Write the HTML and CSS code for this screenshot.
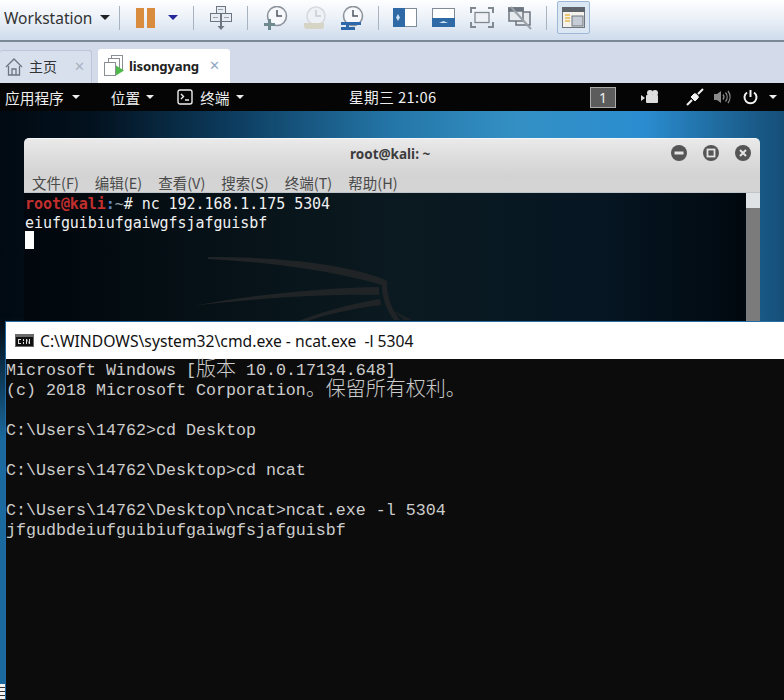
FILE: index.html
```html
<!DOCTYPE html>
<html lang="zh">
<head>
<meta charset="utf-8">
<title>Workstation</title>
<link rel="stylesheet" href="styles.css">
</head>
<body>
<div class="app">
  <header class="toolbar">
    <div class="wsmenu"><span class="wsname">Workstation</span><i class="caret dark"></i></div>
    <span class="sep s1"></span>
    <svg class="ic pause" width="20" height="20" viewBox="0 0 20 20"><rect x="0" y="0" width="8" height="20" fill="#d98b3e"/><rect x="11" y="0" width="8" height="20" fill="#d98b3e"/></svg>
    <i class="caret blue"></i>
    <span class="sep s2"></span>
    <svg class="ic keys" width="22" height="24" viewBox="0 0 22 24" fill="#e8edf3" stroke="#6d7580"><rect x="6.500" y=".5" width="9" height="7"/><rect x=".5" y="7.500" width="10" height="8"/><rect x="11.500" y="7.500" width="10" height="8"/><path d="M3 11.500h5M14 11.500h5M8 3.500h5" stroke="#9aa3ad"/><path d="M11 16v5" stroke="#6d7580" stroke-width="2"/><path d="M7.500 20h7L11 24z" fill="#6d7580" stroke="none"/></svg>
    <span class="sep s3"></span>
    <svg class="ic clock1" width="25" height="24" viewBox="0 0 25 24"><circle cx="14" cy="10" r="9.500" fill="#f6f8fb" stroke="#8d949c" stroke-width="1.600"/><path d="M14 4v6h5" fill="none" stroke="#4d5660" stroke-width="1.500"/><path d="M5 13v4H1v3h4v4h3v-4h4v-3H8v-4z" fill="#6f8a8f"/></svg>
    <svg class="ic clock2" width="24" height="24" viewBox="0 0 24 24"><circle cx="13" cy="10" r="9" fill="#eef1f5" stroke="#d6dade" stroke-width="1.600"/><path d="M13 4v6h5" fill="none" stroke="#c6cbd1" stroke-width="1.500"/><path d="M1 17h20v3a3 3 0 0 1-3 3H4a3 3 0 0 1-3-3z" fill="#d6d4c4"/></svg>
    <svg class="ic clock3" width="24" height="24" viewBox="0 0 24 24"><circle cx="13" cy="10" r="9.500" fill="#f6f8fb" stroke="#8d949c" stroke-width="1.600"/><path d="M13 4v6h5" fill="none" stroke="#4d5660" stroke-width="1.500"/><path d="M1 16h20v3H9v2h6v3H1v-3h5v-2H1z" fill="#2f68a8"/></svg>
    <span class="sep s4"></span>
    <svg class="ic fit1" width="24" height="19" viewBox="0 0 24 19"><rect width="24" height="19" fill="#7f8b97"/><rect x="1" y="1" width="22" height="17" fill="#fff"/><rect x="0" y="0" width="12" height="19" fill="#2f6aa6"/><path d="M5 6l2 3.500-2 3.500-2-3.500z" fill="#cfe2f5"/></svg>
    <svg class="ic fit2" width="23" height="19" viewBox="0 0 23 19"><rect width="23" height="19" fill="#7f8b97"/><rect x="1" y="1" width="21" height="17" fill="#fff"/><rect x="0" y="10" width="23" height="9" fill="#2f6aa6"/><path d="M7 15l4.500-2 4.500 2z" fill="#cfe2f5"/></svg>
    <svg class="ic fit3" width="24" height="21" viewBox="0 0 24 21" fill="none" stroke="#808890" stroke-width="2"><path d="M1 6V1h5M18 1h5v5M23 15v5h-5M6 20H1v-5"/><rect x="5" y="5.500" width="14" height="10" fill="#eef2f7" stroke-width="1.300"/></svg>
    <svg class="ic fit4" width="24" height="24" viewBox="0 0 24 24" fill="#e6e9ed" stroke="#6d7580" stroke-width="1.500"><rect x="8" y="6" width="14" height="13"/><rect x="1" y="2" width="14" height="13"/><rect x="1" y="2" width="14" height="3" fill="#6d7580"/><path d="M3 1l20 22" stroke="#9aa1a8" stroke-width="2"/></svg>
    <span class="sep s5"></span>
    <div class="activebtn">
      <svg width="23" height="21" viewBox="0 0 23 21"><rect x=".5" y=".5" width="22" height="20" fill="#f4f2ea" stroke="#6f7680"/><rect x="0" y="0" width="23" height="5" fill="#5d646c"/><path d="M3 8h5M3 11h5M3 14h5" stroke="#e3b94f" stroke-width="1.500"/><rect x="10" y="9" width="11" height="10" fill="#c5ccd6" stroke="#6f7680"/></svg>
    </div>
  </header>
  <nav class="tabbar">
    <div class="tab home">
      <svg width="18" height="19" viewBox="0 0 18 19" fill="none" stroke="#6b7480" stroke-width="1.300"><path d="M1 10 9 2l8 8"/><path d="M3.500 9v9h11V9"/><path d="M7 18v-6h4v6"/></svg>
      <span class="tabtxt">主页</span>
      <span class="x grey">✕</span>
    </div>
    <div class="tab vm">
      <svg width="21" height="21" viewBox="0 0 21 21" fill="#fff" stroke="#8a8f96"><rect x="7.500" y=".5" width="11" height="14"/><rect x="4.500" y="3.500" width="11" height="12"/><rect x=".5" y="7.500" width="11" height="13"/><path d="M12 10.500l8 5-8 5z" fill="#4fb84a" stroke="none"/></svg>
      <b class="vmname">lisongyang</b>
      <span class="x blue">✕</span>
    </div>
  </nav>
  <main class="desktop">
    <div class="panel">
      <span class="pitem apps">应用程序<i class="caret light"></i></span>
      <span class="pitem places">位置<i class="caret light"></i></span>
      <span class="pitem term">
        <svg width="16" height="16" viewBox="0 0 16 16" fill="none" stroke="#eee" stroke-width="1.400"><rect x="1" y="1" width="14" height="14" rx="2"/><path d="M4 5l2.500 2.500L4 10M8 11h4"/></svg>
        <span>终端</span><i class="caret light"></i>
      </span>
      <span class="clock">星期三 21:06</span>
      <span class="workspace">1</span>
      <svg class="tray cam" width="17" height="14" viewBox="0 0 17 14" fill="#ddd"><circle cx="9" cy="3" r="3"/><circle cx="14" cy="3" r="3"/><rect x="5" y="5" width="12" height="8" rx="1"/><path d="M0 5l4 3-4 3z"/></svg>
      <svg class="tray plug" width="18" height="18" viewBox="0 0 18 18" fill="none" stroke="#f2f2f2" stroke-width="2"><path d="M1 17l5-5M12 6l5-5"/><path d="M5 9l4 4 3-3c1.500-1.500-2.500-5.500-4-4z" fill="#f2f2f2" stroke-width="1"/></svg>
      <svg class="tray vol" width="18" height="14" viewBox="0 0 18 14" fill="none" stroke="#8a8a8a" stroke-width="1.300"><path d="M0 4h3l4-3v12l-4-3H0z" fill="#8a8a8a" stroke="none"/><path d="M9 4.500a4 4 0 0 1 0 5M11.500 2.500a7 7 0 0 1 0 9M14 1a10 10 0 0 1 0 12"/></svg>
      <svg class="tray pow" width="15" height="16" viewBox="0 0 15 16" fill="none" stroke="#f2f2f2" stroke-width="2"><path d="M7.500 1v7"/><path d="M4 3.500a6 6 0 1 0 7 0"/></svg>
      <i class="caret light end"></i>
    </div>

    <section class="terminal">
      <div class="tchrome">
        <div class="ttitle">
          <span class="ttext">root@kali: ~</span>
          <div class="wbtns">
            <svg class="wbtn" width="20" height="16" viewBox="0 0 16 16"><circle cx="8" cy="8" r="8" fill="#555"/><rect x="3.500" y="6.500" width="9" height="3" fill="#e4e4e4"/></svg>
            <svg class="wbtn" width="20" height="16" viewBox="0 0 16 16"><circle cx="8" cy="8" r="8" fill="#555"/><rect x="4.500" y="4.500" width="7" height="7" fill="none" stroke="#e4e4e4" stroke-width="1.800"/></svg>
            <svg class="wbtn" width="20" height="16" viewBox="0 0 16 16"><circle cx="8" cy="8" r="8" fill="#555"/><path d="M5 5l6 6M11 5l-6 6" stroke="#e4e4e4" stroke-width="2"/></svg>
          </div>
        </div>
        <div class="tmenu">
          <span>文件(F)</span><span>编辑(E)</span><span>查看(V)</span><span>搜索(S)</span><span>终端(T)</span><span>帮助(H)</span>
        </div>
      </div>
      <div class="tbody">
        <svg class="dragon" width="736" height="128" viewBox="24 193 736 128" fill="#212426">
          <path d="M208 257C270 257 340 262 386 280L385 286C340 272 270 262 208 259z"/>
          <path d="M193 306C250 295 320 288 379 287L379 295C320 294 250 299 193 306z"/>
          <path d="M298 321C325 311 350 304 380 299L381 305C350 309 325 315 308 321z"/>
          <path d="M382 280L387 281C386 295 392 310 400 320L394 320C386 310 381 295 382 280z"/>
          <path d="M392 310L412 320H404z" fill="#1c2124"/>
        </svg>
        <div class="tlines">
          <div class="tline"><span class="tuser">root@kali</span><span class="tcolon">:</span><span class="tdim">~</span><span># nc 192.168.1.175 5304</span></div>
          <div class="tline">eiufguibiufgaiwgfsjafguisbf</div>
          <div class="tline"><span class="cursor"></span></div>
        </div>
        <div class="scroll"><div class="thumb"></div></div>
      </div>
    </section>

    <section class="cmd">
      <div class="cmdtitle">
        <svg width="19" height="13" viewBox="0 0 19 13"><rect width="19" height="13" fill="#6a6a6a"/><rect x="1" y="3" width="17" height="9" fill="#111"/><path d="M3 5h3v1H4v3h2v1H3zM8 8h1v2H8zM8 5h1v2H8zM11 5h1l2 4V5h1v5h-1l-2-4v4h-1z" fill="#ddd"/></svg>
        <span class="cmdtext">C:\WINDOWS\system32\cmd.exe - ncat.exe&nbsp; -l 5304</span>
      </div>
      <div class="cmdbody">
        <div class="cline"><span>Microsoft Windows [</span><span class="cjk">版本</span><span> 10.0.17134.648]</span></div>
        <div class="cline"><span>(c) 2018 Microsoft Corporation</span><span class="cjk">。保留所有权利。</span></div>
        <div class="cline gap">C:\Users\14762&gt;cd Desktop</div>
        <div class="cline gap">C:\Users\14762\Desktop&gt;cd ncat</div>
        <div class="cline gap">C:\Users\14762\Desktop\ncat&gt;ncat.exe -l 5304</div>
        <div class="cline">jfgudbdeiufguibiufgaiwgfsjafguisbf</div>
      </div>
    </section>
    <div class="sliver"></div>
  </main>
</div>
</body>
</html>
```
FILE: styles.css
```css
* { box-sizing: border-box; }
html, body { margin: 0; padding: 0; height: 700px; overflow: hidden; }
body { font-family: "Noto Sans CJK SC", "Noto Sans", sans-serif; background: #000; }
.app { display: flex; flex-direction: column; width: 784px; height: 700px; }

.caret { display: block; width: 0; height: 0; border-style: solid; border-width: 5px 5px 0; border-color: #222 transparent transparent; }
.caret.blue { border-color: #23279a transparent transparent; margin-left: 12px; }
.caret.light { border-color: #eee transparent transparent; border-width: 4.500px 4.500px 0; }

.toolbar { position: relative; flex: none; height: 42px; display: flex; align-items: center; padding-bottom: 5px; background: linear-gradient(180deg, #fdfeff 0, #eef3f9 40%, #cfdcec 100%); border-bottom: 2px solid #7a8796; }
.wsmenu { display: flex; align-items: center; padding-left: 4px; width: 119px; }
.wsname { font: 15.500px "Noto Sans", sans-serif; color: #333; }
.wsmenu .caret { margin-left: 8px; }
.sep { flex: none; width: 1px; height: 24px; background: #a9b3bf; }
.ic { flex: none; }
.pause { margin-left: 16px; }
.s2 { margin-left: 15px; }
.keys { margin-left: 16px; }
.s3 { margin-left: 15px; }
.clock1 { margin-left: 15px; }
.clock2 { margin-left: 15px; }
.clock3 { margin-left: 13px; }
.s4 { margin-left: 14px; }
.fit1 { margin-left: 14px; }
.fit2 { margin-left: 15px; }
.fit3 { margin-left: 15px; }
.fit4 { margin-left: 14px; }
.s5 { margin-left: 14px; }
.activebtn { flex: none; margin-left: 10px; width: 33px; height: 33px; display: flex; align-items: center; justify-content: center; background: #dbe7f3; border: 1px solid #9db8d6; border-radius: 2px; }

.tabbar { flex: none; height: 41px; display: flex; align-items: flex-end; gap: 6px; background: #d3dbeb; }
.tab { height: 33px; display: flex; align-items: center; border-radius: 3px 3px 0 0; }
.home { width: 92px; padding-left: 5px; padding-bottom: 2px; background: #d8e0ee; border: 1px solid #bcc7d9; border-bottom: 0; border-left: 0; }
.vm { width: 132px; height: 34px; padding-left: 6px; padding-bottom: 1px; background: #fff; }
.tabtxt { margin-left: 6px; font-size: 14px; line-height: 20px; color: #333; }
.vmname { margin-left: 4px; font: bold 13.200px "Noto Sans", sans-serif; color: #222; letter-spacing: -.2px; }
.x { font-size: 13px; line-height: 1; font-family: "DejaVu Sans", sans-serif; }
.x.grey { margin-left: 17px; color: #a9b2bf; }
.x.blue { margin-left: 10px; color: #8fa8c4; }

.desktop { position: relative; flex: 1; overflow: hidden;
  background:
    linear-gradient(180deg, rgba(26,106,159,0) 0, rgba(26,106,159,0) 38%, #1a6a9f 58%),
    linear-gradient(90deg, #010a12 0, #03121f 12%, #0d3d60 30%, #2476a8 50%, #3490c4 66%, #2b8dd0 82%, #1a5c8a 96%, #154f78 100%); }

.panel { position: relative; height: 28px; background: #050505; color: #eee; font-size: 14.700px; display: flex; align-items: center; }
.pitem { display: flex; align-items: center; }
.apps { margin-left: 5px; }
.apps .caret { margin-left: 8px; }
.places { margin-left: 31px; }
.places .caret { margin-left: 6px; }
.term { margin-left: 23px; }
.term span { margin-left: 7px; }
.term .caret { margin-left: 6px; }
.clock { position: absolute; left: 349px; top: 0; line-height: 28px; white-space: nowrap; letter-spacing: .4px; }
.workspace { position: absolute; left: 590px; top: 4px; width: 26px; height: 21px; background: #5c5c5c; border: 1px solid #aaa; text-align: center; font: 14px/19px "Noto Sans", sans-serif; color: #eee; }
.tray { position: absolute; }
.cam { left: 641px; top: 7px; }
.plug { left: 686px; top: 5px; }
.vol { left: 714px; top: 7px; }
.pow { left: 743px; top: 6px; }
.caret.end { position: absolute; left: 769px; top: 12px; }

.terminal { position: absolute; left: 24px; top: 55px; width: 736px; height: 195px; display: flex; flex-direction: column; }
.tchrome { flex: none; height: 55px; background: linear-gradient(180deg, #eaeaea 0, #dedede 30%, #d3d3d3 70%, #d5d5d5 100%); border-radius: 5px 5px 0 0; border-top: 1px solid #f4f6f8; border-bottom: 1px solid #bfc4c8; }
.ttitle { position: relative; height: 30px; text-align: center; }
.ttext { position: absolute; left: 326px; top: 5px; font: bold 13.500px/20px "Noto Sans", sans-serif; color: #3c3c3c; }
.wbtns { position: absolute; right: 7px; top: 6px; display: flex; gap: 12px; }
.wbtn { display: block; }
.tmenu { display: flex; gap: 16px; padding-left: 8px; font-size: 14.500px; line-height: 20px; margin-top: 4px; color: #4a4a4a; }

.tbody { position: relative; flex: 1; overflow: hidden; background: linear-gradient(90deg, #01070c 0, #071319 30%, #0b1a20 50%, #061623 78%, #01090f 98%); }
.dragon { position: absolute; left: 0; top: 0; }
.tlines { position: relative; padding: 2px 0 0 1px; font: 15px/18.500px "DejaVu Sans Mono", monospace; letter-spacing: -.06px; color: #f0f0f0; }
.tline { height: 18.500px; white-space: pre; }
.tuser { color: #c22f2f; font-weight: bold; }
.tcolon { color: #5f86c0; font-weight: bold; }
.tdim { color: #9aa0a8; }
.cursor { display: block; width: 9px; height: 18px; margin-top: -1px; background: #fff; }
.scroll { position: absolute; right: 0; top: 0; width: 14px; height: 100%; background: #7b7b7b; }
.thumb { height: 15px; background: #dfe3e6; }

.cmd { position: absolute; left: 5px; top: 238px; right: 0; bottom: 0; display: flex; flex-direction: column; background: #0c0c0c; border-left: 1px solid #1f6aa5; }
.cmdtitle { flex: none; height: 38px; display: flex; align-items: center; padding-left: 9px; background: #fff; border-top: 1px solid #2a6ea6; color: #111; }
.cmdtext { margin-left: 6px; font: 15.700px "Noto Sans", sans-serif; white-space: pre; }
.cmdbody { padding: 2px 0 0; font: 16.670px/20px "Liberation Mono", "Noto Sans CJK SC", monospace; color: #cccccc; }
.cline { height: 20px; white-space: pre; }
.cline.gap { margin-top: 20px; }
.cjk { font-family: "Noto Sans CJK SC", sans-serif; font-size: 20px; line-height: 0; font-weight: 300; vertical-align: -1px; }

.sliver { position: absolute; left: 0; bottom: 0; width: 5px; height: 16px; background: repeating-linear-gradient(180deg, #f2f2f2 0, #f2f2f2 3px, #333 3px, #333 4px); }
```
